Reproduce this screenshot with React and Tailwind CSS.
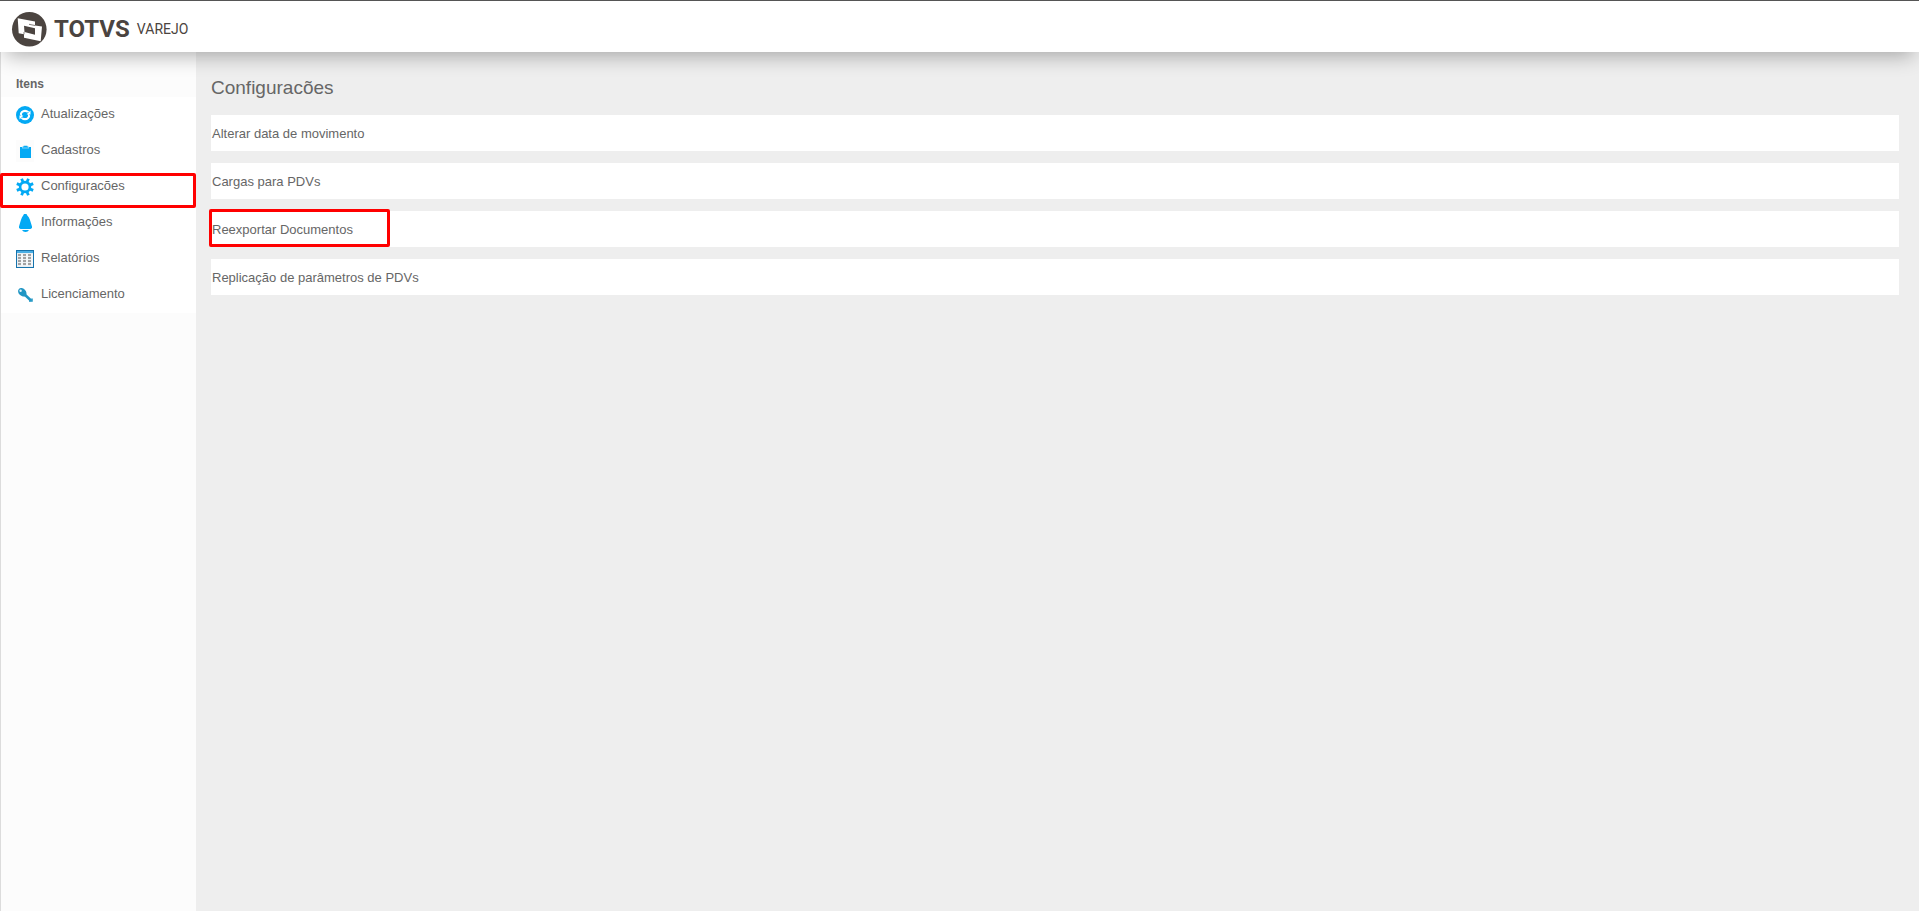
import React from 'react';

const UpdateIcon = () => (
  <svg width="18" height="18" viewBox="0 0 18 18" aria-hidden="true">
    <circle cx="9" cy="9" r="9" fill="#03a9f4" />
    <circle cx="9" cy="9" r="4.2" fill="none" stroke="#fff" strokeWidth="2.2" />
    <path d="M3 8.500l3.400 3.200M15 9.500l-3.400-3.200" stroke="#03a9f4" strokeWidth="1.200" />
    <path d="M10.600 8.600h3.900V4.500z" fill="#fff" />
    <path d="M7.400 9.400H3.500v4.100z" fill="#fff" />
  </svg>
);

const ClipboardIcon = () => (
  <svg width="18" height="22" viewBox="0 0 18 22" aria-hidden="true">
    <path d="M0 0h18v22H0z" fill="#fcfcfc" />
    <path d="M4 7h11v11H4z" fill="#03a9f4" />
    <path d="M6 8.500V7l2-1.500h3L13 7v1.500z" fill="#7fd2f8" />
    <path d="M7 7.500h5V7l-1.500-1h-2L7 7z" fill="#03a9f4" />
  </svg>
);

const GearIcon = () => (
  <svg width="18" height="18" viewBox="0 0 18 18" aria-hidden="true">
    <path
      d="M5.600 0.800L12.400 17.200M12.400 0.800L5.600 17.200M0.800 5.600L17.200 12.400M17.200 5.600L0.800 12.400"
      stroke="#03a9f4"
      strokeWidth="2.800"
    />
    <circle cx="9" cy="9" r="6.200" fill="#03a9f4" />
    <circle cx="9" cy="9" r="3.600" fill="#fff" />
  </svg>
);

const BellIcon = () => (
  <svg width="18" height="18" viewBox="0 0 18 18" aria-hidden="true">
    <path d="M8 0h2.500l.8 1.500c2.200 1.800 3.200 6 4.700 11V14l-1.500 1H4.500L3 14v-1.500c1.500-5 2.500-9.200 4.200-11z" fill="#03a9f4" />
    <path d="M6 16h7c-.8 1.300-1.900 2-3.500 2S6.800 17.300 6 16z" fill="#03a9f4" />
  </svg>
);

const ReportIcon = () => (
  <svg width="18" height="18" viewBox="0 0 18 18" aria-hidden="true">
    <path d="M0 0h18v18H0z" fill="#1673ac" />
    <path d="M1 1h16v2H1z" fill="#4aaee4" />
    <path d="M1 3h16v14H1z" fill="#e9eef2" />
    <path d="M2 5h3M7 5h3M12 5h3M2 8h3M7 8h3M12 8h3M2 11h3M7 11h3M12 11h3M2 14h3M7 14h3M12 14h3" stroke="#a2a2a2" strokeWidth="2" />
    <path d="M6 4v12M11 4v12M16 4v12" stroke="#fff" />
  </svg>
);

const KeyIcon = () => (
  <svg width="18" height="18" viewBox="0 0 18 18" aria-hidden="true">
    <path d="M7.500 7.500L15 14.500" stroke="#2196c4" strokeWidth="2.600" />
    <path d="M13 15h3v-2.500" fill="none" stroke="#2196c4" strokeWidth="1.500" />
    <ellipse cx="6.300" cy="6.300" rx="4.800" ry="3.600" transform="rotate(45 6.300 6.300)" fill="#2196c4" />
    <circle cx="4.600" cy="4.800" r="1.200" fill="#e3f3f9" />
  </svg>
);

const TotvsMark = () => (
  <svg width="36" height="36" viewBox="0 0 36 36" aria-hidden="true">
    <circle cx="18.300" cy="18.300" r="17.300" fill="#4b4440" />
    <path d="M6.700 7.200L24 10.500v4l7 1.100-1.300 14.700L13 26.800v-3.500l-5.300-1.100z" fill="#fff" />
    <path d="M13 14.800l11 2.500v6.400L13.500 21z" fill="#4b4440" />
    <path d="M24 14.500l-6-1.200M13 23.300V21" fill="none" stroke="#4b4440" strokeWidth="0.700" />
  </svg>
);

const menu = [
  { label: 'Atualizações', Icon: UpdateIcon },
  { label: 'Cadastros', Icon: ClipboardIcon },
  { label: 'Configuracões', Icon: GearIcon, marked: true },
  { label: 'Informações', Icon: BellIcon },
  { label: 'Relatórios', Icon: ReportIcon },
  { label: 'Licenciamento', Icon: KeyIcon },
];

const options = [
  { label: 'Alterar data de movimento' },
  { label: 'Cargas para PDVs' },
  { label: 'Reexportar Documentos', marked: true },
  { label: 'Replicação de parâmetros de PDVs' },
];

const Header = () => (
  <header className="relative z-10 flex h-[52px] items-center border-t border-[#555] bg-white pt-1 pl-[11px] text-[#4b4440] shadow-[0_10px_20px_-6px_rgba(0,0,0,0.3)]">
    <a href="#inicio" className="flex items-center font-[Roboto,sans-serif]">
      <TotvsMark />
      <span className="ml-[7px] text-[24px] leading-8 font-bold">TOTVS</span>
      <span className="ml-[7px] text-[14px] leading-8">VAREJO</span>
    </a>
  </header>
);

const Sidebar = () => (
  <aside className="w-[196px] shrink-0 border-l border-[#dcdcdc] bg-[#fcfcfc]">
    <h2 className="h-[45px] pt-6 pl-[15px] text-[12px] leading-4 font-bold">Itens</h2>
    <nav className="bg-white">
      <ul>
        {menu.map(({ label, Icon, marked }) => (
          <li key={label} className="relative">
            <a href="#menu" className="flex h-9 items-center pl-[15px]">
              <Icon />
              <span className="ml-[7px] pb-0.5">{label}</span>
            </a>
            {marked && (
              <span className="pointer-events-none absolute top-1 right-0 -left-px h-[35px] rounded-xs border-3 border-[#f00]" />
            )}
          </li>
        ))}
      </ul>
    </nav>
  </aside>
);

const App = () => {
  return (
    <div className="flex min-h-screen flex-col bg-[#eee] font-['Liberation_Sans',Arial,sans-serif] text-[13px] leading-5 text-[#666]">
      <Header />
      <div className="flex grow">
        <Sidebar />
        <main className="grow pt-6 pr-5 pl-[15px]">
          <h1 className="text-[19px] leading-6">Configuracões</h1>
          <ul className="mt-[15px] flex flex-col gap-3">
            {options.map(({ label, marked }) => (
              <li key={label} className="relative bg-white">
                <a href="#opcao" className="flex h-9 items-center pt-0.5 pl-px">
                  {label}
                </a>
                {marked && (
                  <span className="pointer-events-none absolute -top-0.5 -left-0.5 h-[38px] w-[181px] rounded-xs border-3 border-[#f00]" />
                )}
              </li>
            ))}
          </ul>
        </main>
      </div>
    </div>
  );
};

export default App;
